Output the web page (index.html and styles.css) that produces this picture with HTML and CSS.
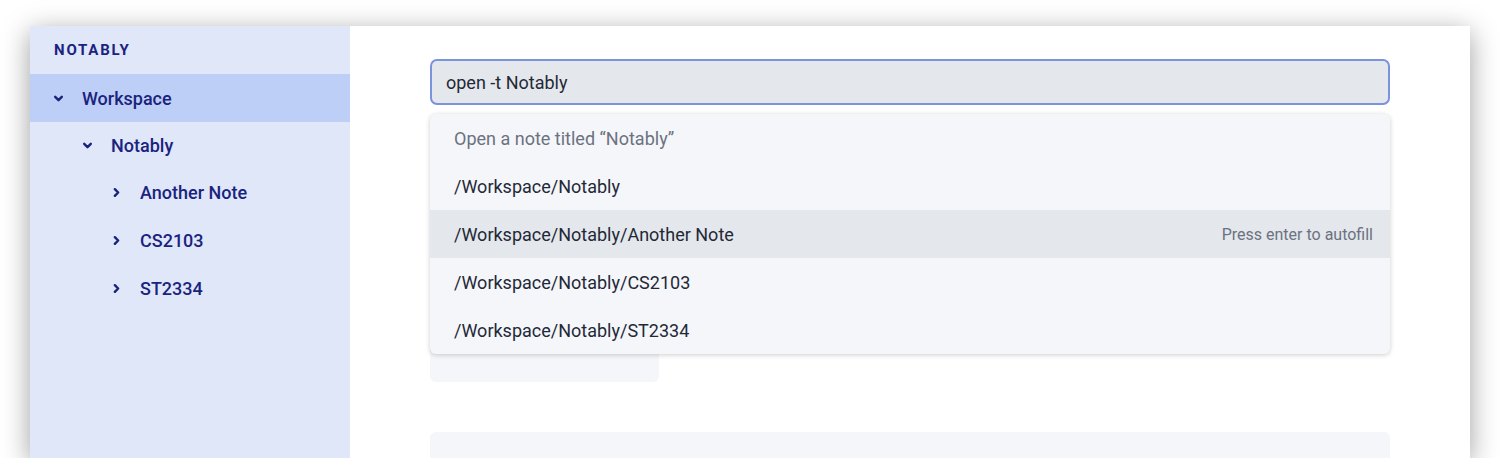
FILE: index.html
```html
<!DOCTYPE html>
<html>
<head>
<meta charset="utf-8">
<link rel="stylesheet" href="styles.css">
</head>
<body>
<div class="window">
  <aside class="sidebar">
    <div class="brand">NOTABLY</div>
    <div class="tree">
      <div class="row active lvl0"><svg class="chev" viewBox="0 0 10 10"><path d="M2 3.5 L5 6.5 L8 3.5"/></svg><span>Workspace</span></div>
      <div class="row lvl1"><svg class="chev" viewBox="0 0 10 10"><path d="M2 3.5 L5 6.5 L8 3.5"/></svg><span>Notably</span></div>
      <div class="row lvl2"><svg class="chev" viewBox="0 0 10 10"><path d="M3.5 2 L6.5 5 L3.5 8"/></svg><span>Another Note</span></div>
      <div class="row lvl2"><svg class="chev" viewBox="0 0 10 10"><path d="M3.5 2 L6.5 5 L3.5 8"/></svg><span>CS2103</span></div>
      <div class="row lvl2"><svg class="chev" viewBox="0 0 10 10"><path d="M3.5 2 L6.5 5 L3.5 8"/></svg><span>ST2334</span></div>
    </div>
  </aside>
  <main class="main">
    <div class="command">
      <div class="input">open -t Notably</div>
      <div class="dropdown">
        <div class="opt hint">Open a note titled “Notably”</div>
        <div class="opt">/Workspace/Notably</div>
        <div class="opt selected"><span>/Workspace/Notably/Another Note</span><span class="tip">Press enter to autofill</span></div>
        <div class="opt">/Workspace/Notably/CS2103</div>
        <div class="opt">/Workspace/Notably/ST2334</div>
      </div>
    </div>
    <div class="ph ph-title"></div>
    <div class="ph ph-body"></div>
  </main>
</div>
</body>
</html>
```
FILE: styles.css
```css
html, body {
  margin: 0;
  padding: 0;
  background: #ffffff;
  overflow: hidden;
  height: 458px;
}
body {
  padding: 26px 30px 0 30px;
  box-sizing: border-box;
  font-family: Roboto, "Liberation Sans", sans-serif;
}
.window {
  display: flex;
  height: 432px;
  background: #ffffff;
  box-shadow: 0 6px 26px rgba(0, 0, 0, 0.38);
}
.sidebar {
  width: 320px;
  flex: none;
  background: #e0e7f9;
  color: #1a237e;
}
.brand {
  height: 48px;
  box-sizing: border-box;
  padding: 15px 0 0 24px;
  font-size: 15px;
  font-weight: 700;
  letter-spacing: 1.8px;
  line-height: 18px;
}
.row {
  height: 48px;
  display: flex;
  align-items: center;
  font-size: 18px;
  font-weight: 500;
}
.row.active { background: #bdcff6; }
.lvl0 { padding-left: 23px; }
.lvl1 { padding-left: 52px; height: 46px; }
.lvl2 { padding-left: 81px; }
.chev {
  width: 11px;
  height: 11px;
  margin-right: 18px;
  fill: none;
  stroke: #1a237e;
  stroke-width: 2.2;
  stroke-linecap: round;
  stroke-linejoin: round;
}
.main {
  flex: 1;
  padding: 33px 80px 0 80px;
  overflow: hidden;
}
.command {
  position: relative;
}
.input {
  height: 46px;
  box-sizing: border-box;
  border: 2px solid #7a93dd;
  border-radius: 7px;
  background: #e4e7ec;
  padding: 0 14px;
  display: flex;
  align-items: center;
  font-size: 18px;
  color: #1f2937;
}
.dropdown {
  position: absolute;
  left: 0;
  right: 0;
  top: 55px;
  background: #f5f6fa;
  border-radius: 6px;
  box-shadow: 0 1px 5px rgba(0, 0, 0, 0.2);
  overflow: hidden;
  z-index: 2;
}
.opt {
  height: 48px;
  display: flex;
  align-items: center;
  justify-content: space-between;
  padding: 0 17px 0 24px;
  font-size: 18px;
  color: #1f2937;
}
.opt.hint { color: #6b7280; }
.opt.selected { background: #e4e7ec; }
.tip {
  font-size: 16px;
  color: #6b7280;
}
.ph {
  background: #f5f6fa;
  border-radius: 6px;
}
.ph-title {
  width: 229px;
  height: 48px;
  margin-top: 229px;
}
.ph-body {
  height: 120px;
  margin-top: 50px;
}
```
